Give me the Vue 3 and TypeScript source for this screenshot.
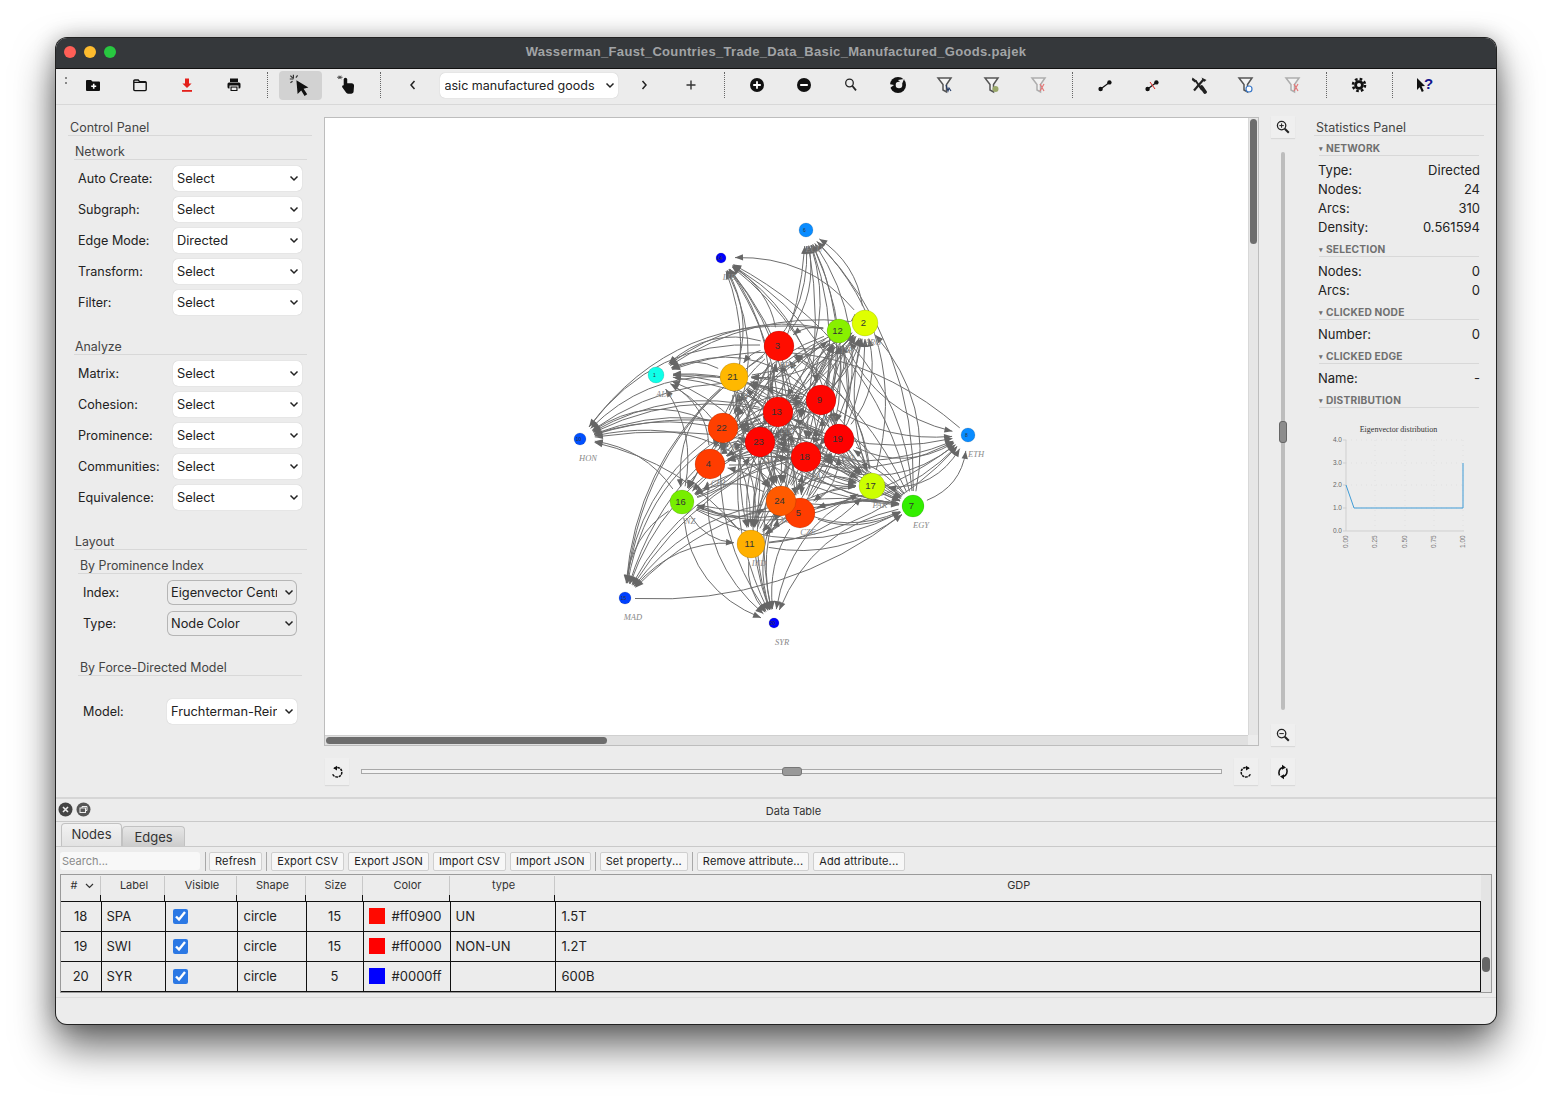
<script setup lang="ts">
import { computed } from 'vue'

interface GraphNode {
  id: number
  label: string
  x: number
  y: number
  r: number
  color: string
}

const networkRows = [
  { label: 'Auto Create:', value: 'Select' },
  { label: 'Subgraph:', value: 'Select' },
  { label: 'Edge Mode:', value: 'Directed' },
  { label: 'Transform:', value: 'Select' },
  { label: 'Filter:', value: 'Select' },
]
const analyzeRows = ['Matrix:', 'Cohesion:', 'Prominence:', 'Communities:', 'Equivalence:']

const statSections = [
  {
    title: 'NETWORK',
    rows: [
      ['Type:', 'Directed'],
      ['Nodes:', '24'],
      ['Arcs:', '310'],
      ['Density:', '0.561594'],
    ],
  },
  { title: 'SELECTION', rows: [['Nodes:', '0'], ['Arcs:', '0']] },
  { title: 'CLICKED NODE', rows: [['Number:', '0']] },
  { title: 'CLICKED EDGE', rows: [['Name:', '-']] },
  { title: 'DISTRIBUTION', rows: [] as string[][] },
]

const tableButtons = [
  ['Refresh', '|'],
  ['Export CSV'],
  ['Export JSON'],
  ['Import CSV'],
  ['Import JSON', '|'],
  ['Set property...', '|'],
  ['Remove attribute...'],
  ['Add attribute...'],
]

const tableRows = [
  { num: 18, label: 'SPA', size: 15, color: '#ff0900', type: 'UN', gdp: '1.5T' },
  { num: 19, label: 'SWI', size: 15, color: '#ff0000', type: 'NON-UN', gdp: '1.2T' },
  { num: 20, label: 'SYR', size: 5, color: '#0000ff', type: '', gdp: '600B' },
]

// node coordinates are page pixels, the svg viewBox starts at the canvas corner
const nodes: GraphNode[] = [
  { id: 1, label: 'ALG', x: 656, y: 375, r: 8, color: '#0fffe8' },
  { id: 2, label: 'ARG', x: 865, y: 323, r: 13, color: '#dfff00' },
  { id: 3, label: 'BRA', x: 779, y: 346, r: 15, color: '#ff0d00' },
  { id: 4, label: 'CHI', x: 710, y: 464, r: 15, color: '#ff3c00' },
  { id: 5, label: 'CZE', x: 800, y: 513, r: 15, color: '#ff3c00' },
  { id: 6, label: 'ECU', x: 806, y: 230, r: 7, color: '#0a8cff' },
  { id: 7, label: 'EGY', x: 913, y: 506, r: 11, color: '#33ee00' },
  { id: 8, label: 'ETH', x: 968, y: 435, r: 7, color: '#0a8cff' },
  { id: 9, label: 'FIN', x: 821, y: 400, r: 15, color: '#ff0500' },
  { id: 10, label: 'HON', x: 580, y: 439, r: 6, color: '#0050ff' },
  { id: 11, label: 'IND', x: 751, y: 544, r: 14, color: '#ffb000' },
  { id: 12, label: 'ISR', x: 839, y: 331, r: 12, color: '#88f000' },
  { id: 13, label: 'JAP', x: 778, y: 412, r: 15, color: '#ff0a00' },
  { id: 14, label: 'LIB', x: 721, y: 258, r: 5, color: '#0000ff' },
  { id: 15, label: 'MAD', x: 625, y: 598, r: 6, color: '#0040ff' },
  { id: 16, label: 'NZ', x: 682, y: 502, r: 12, color: '#77ee00' },
  { id: 17, label: 'PAK', x: 872, y: 486, r: 13, color: '#ccff00' },
  { id: 18, label: 'SPA', x: 806, y: 457, r: 15, color: '#ff0900' },
  { id: 19, label: 'SWI', x: 839, y: 439, r: 15, color: '#ff0000' },
  { id: 20, label: 'SYR', x: 774, y: 623, r: 5, color: '#0000ff' },
  { id: 21, label: 'TAI', x: 734, y: 377, r: 14, color: '#ffb800' },
  { id: 22, label: 'UK', x: 723, y: 428, r: 15, color: '#ff4000' },
  { id: 23, label: 'US', x: 760, y: 442, r: 15, color: '#ff0500' },
  { id: 24, label: 'YUG', x: 781, y: 501, r: 15, color: '#ff5a00' },
]

// small seeded generator so the arcs stay the same on every load
function seeded(start: number) {
  let s = start
  return () => {
    s = (s * 1664525 + 1013904223) % 4294967296
    return s / 4294967296
  }
}

const edges = computed(() => {
  const rand = seeded(20240)
  let lines = ''
  let heads = ''
  for (const a of nodes) {
    for (const b of nodes) {
      if (a === b) continue
      const dx = b.x - a.x
      const dy = b.y - a.y
      const dist = Math.hypot(dx, dy)
      const outer = b.r < 9
      // outer nodes mostly receive, and nothing spans the whole drawing
      const chance = a.r < 9 ? 0.04 : outer ? 0.8 : 0.52
      if (rand() > chance || dist > 340) continue
      const bend = outer ? 0.16 + rand() * 0.14 : 0.12 + rand() * 0.16
      const cx = (a.x + b.x) / 2 - dy * bend
      const cy = (a.y + b.y) / 2 + dx * bend
      // stop short of the target, small nodes keep a wider ring of arrowheads
      const gap = b.r + (outer ? 9 : 3)
      const len = Math.hypot(cx - b.x, cy - b.y) || 1
      const ux = (cx - b.x) / len
      const uy = (cy - b.y) / len
      const ex = b.x + ux * gap
      const ey = b.y + uy * gap
      const startLen = Math.hypot(cx - a.x, cy - a.y) || 1
      const sx = a.x + ((cx - a.x) / startLen) * (a.r + 4)
      const sy = a.y + ((cy - a.y) / startLen) * (a.r + 4)
      lines += `M${sx.toFixed(1)} ${sy.toFixed(1)}Q${cx.toFixed(1)} ${cy.toFixed(1)} ${ex.toFixed(1)} ${ey.toFixed(1)}`
      const bx = ex + ux * 8
      const by = ey + uy * 8
      heads += `M${ex.toFixed(1)} ${ey.toFixed(1)}L${(bx - uy * 3.2).toFixed(1)} ${(by + ux * 3.2).toFixed(1)}L${(bx + uy * 3.2).toFixed(1)} ${(by - ux * 3.2).toFixed(1)}Z`
    }
  }
  return { lines, heads }
})

const chartTicks = [
  { label: '4.0', y: 440 },
  { label: '3.0', y: 463 },
  { label: '2.0', y: 485 },
  { label: '1.0', y: 508 },
  { label: '0.0', y: 531 },
]
const chartXTicks = [
  { label: '0.00', x: 1346 },
  { label: '0.25', x: 1375 },
  { label: '0.50', x: 1405 },
  { label: '0.75', x: 1434 },
  { label: '1.00', x: 1463 },
]
</script>

<template>
  <div class="page">
    <div class="window">
      <!-- Title bar -->
      <header class="titlebar">
        <div class="lights">
          <span class="light red" />
          <span class="light yellow" />
          <span class="light green" />
        </div>
        <span class="title">Wasserman_Faust_Countries_Trade_Data_Basic_Manufactured_Goods.pajek</span>
      </header>

      <!-- Toolbar -->
      <div class="toolbar">
        <span class="grip" />
        <button class="tool">
          <svg width="16" height="16" viewBox="0 0 16 16"><path d="M1 4a1 1 0 0 1 1-1h4l1.500 1.600H14a1 1 0 0 1 1 1V13a1 1 0 0 1-1 1H2a1 1 0 0 1-1-1z" fill="#111" /><path d="M8.700 6.800v5M6.200 9.300h5" stroke="#fff" stroke-width="1.600" /></svg>
        </button>
        <button class="tool">
          <svg width="16" height="16" viewBox="0 0 16 16"><path d="M1.800 4a1 1 0 0 1 1-1h3.400l1.400 1.600h5.600a1 1 0 0 1 1 1V12.600a1 1 0 0 1-1 1H2.800a1 1 0 0 1-1-1z" fill="none" stroke="#111" stroke-width="1.400" /><path d="M2 5.400h12" stroke="#111" stroke-width="1.400" /></svg>
        </button>
        <button class="tool">
          <svg width="16" height="16" viewBox="0 0 16 16"><path d="M6 1.500h4v5h2.600L8 11 3.400 6.500H6z" fill="#e3201b" /><rect x="3" y="13" width="10" height="1.800" fill="#e3201b" /></svg>
        </button>
        <button class="tool">
          <svg width="16" height="16" viewBox="0 0 16 16"><rect x="4" y="1.500" width="8" height="3.500" fill="#111" /><rect x="1.500" y="5.500" width="13" height="6" rx="1.500" fill="#111" /><rect x="4" y="9" width="8" height="5.500" fill="#111" stroke="#ececec" stroke-width="1" /><rect x="5.600" y="10.600" width="4.800" height="2.400" fill="#ececec" /></svg>
        </button>
        <span class="sep" />
        <button class="tool active">
          <svg width="24" height="24" viewBox="0 0 20 20"><path d="M7 6l10 6-4 1.200 3 4.600-2.200 1.400-2.800-4.600-3 2.800z" fill="#111" /><path d="M4.500 1.500v3M1.500 5h3M2 2.200l1.800 1.800M8 2L6.600 3.800M2 8.200l1.800-1.400" stroke="#333" stroke-width="1" fill="none" /></svg>
        </button>
        <button class="tool">
          <svg width="22" height="22" viewBox="0 0 20 20"><rect x="7" y="3.500" width="3.200" height="9" rx="1.600" fill="#111" /><path d="M7.500 8.500h6.700c1.300 0 2.300 1 2.200 2.300l-.4 5.200c-.1 1.200-1 2-2.200 2h-2.600c-.8 0-1.400-.3-1.900-1l-3.600-5c-.6-1 .6-2.200 1.600-1.500l.6.400z" fill="#111" /><path d="M3.500 1.500v3M1 3h5M2 1.800l3 2.600M5 1.800L2 4.400" stroke="#444" stroke-width=".8" fill="none" /></svg>
        </button>
        <span class="sep" />
        <button class="tool">
          <svg width="10" height="12" viewBox="0 0 10 12"><path d="M6.500 2L3 6l3.500 4" fill="none" stroke="#222" stroke-width="1.500" /></svg>
        </button>
        <div class="select-wrap graph-select">
          <select><option>asic manufactured goods</option></select>
          <svg class="chev" width="10" height="7" viewBox="0 0 10 7"><path d="M1.500 1.500L5 5l3.500-3.500" fill="none" stroke="#222" stroke-width="1.500" /></svg>
        </div>
        <button class="tool">
          <svg width="10" height="12" viewBox="0 0 10 12"><path d="M3.500 2L7 6l-3.500 4" fill="none" stroke="#222" stroke-width="1.500" /></svg>
        </button>
        <button class="tool">
          <svg width="12" height="12" viewBox="0 0 12 12"><path d="M6 1.500v9M1.500 6h9" stroke="#333" stroke-width="1.400" /></svg>
        </button>
        <span class="sep" />
        <button class="tool">
          <svg width="16" height="16" viewBox="0 0 16 16"><circle cx="8" cy="8" r="7" fill="#111" /><path d="M8 4.200v7.600M4.200 8h7.600" stroke="#fff" stroke-width="1.800" /></svg>
        </button>
        <button class="tool">
          <svg width="16" height="16" viewBox="0 0 16 16"><circle cx="8" cy="8" r="7" fill="#111" /><path d="M4.200 8h7.600" stroke="#fff" stroke-width="1.800" /></svg>
        </button>
        <button class="tool">
          <svg width="16" height="16" viewBox="0 0 16 16"><circle cx="6.500" cy="6" r="3.800" fill="none" stroke="#222" stroke-width="1.300" /><path d="M9.400 9l3.600 4.400" stroke="#222" stroke-width="1.800" /></svg>
        </button>
        <button class="tool">
          <svg width="18" height="18" viewBox="0 0 18 18"><circle cx="9" cy="9" r="8" fill="#111" /><circle cx="10" cy="9" r="3.300" fill="#ececec" /><path d="M0 8l5 1-4 3z" fill="#ececec" /><path d="M9 4l6-1-2 5z" fill="#ececec" /></svg>
        </button>
        <button class="tool">
          <svg width="18" height="18" viewBox="0 0 18 18"><path d="M2 2h13L10.500 8.500V16L7 14V8.500z" fill="#f4f4f4" stroke="#555" stroke-width="1.500" /><path d="M10 9l2 6 1-3 2 3" fill="none" stroke="#223a66" stroke-width="1.100" /></svg>
        </button>
        <button class="tool">
          <svg width="18" height="18" viewBox="0 0 18 18"><path d="M2 2h13L10.500 8.500V16L7 14V8.500z" fill="#f4f4f4" stroke="#555" stroke-width="1.500" /><circle cx="12.500" cy="13" r="3" fill="#9aa86a" /></svg>
        </button>
        <button class="tool faded">
          <svg width="18" height="18" viewBox="0 0 18 18"><path d="M2 2h13L10.500 8.500V16L7 14V8.500z" fill="#f4f4f4" stroke="#999" stroke-width="1.500" /><path d="M10 8l4 7M14 8l-4 7" stroke="#e25050" stroke-width="1.200" /></svg>
        </button>
        <span class="sep" />
        <button class="tool">
          <svg width="16" height="16" viewBox="0 0 16 16"><path d="M3 12.500L13 5" stroke="#111" stroke-width="1.200" /><circle cx="3.600" cy="12" r="2.200" fill="#111" /><circle cx="12.400" cy="5.400" r="2.200" fill="#111" /></svg>
        </button>
        <button class="tool">
          <svg width="16" height="16" viewBox="0 0 16 16"><path d="M3 12.500L13 5" stroke="#111" stroke-width="1.200" /><circle cx="3.600" cy="12" r="2.200" fill="#111" /><circle cx="12.400" cy="5.400" r="2.200" fill="#111" /><path d="M6 5l5 7" stroke="#e0201c" stroke-width="1" /></svg>
        </button>
        <button class="tool">
          <svg width="18" height="18" viewBox="0 0 18 18"><path d="M5.500 4.500L12 14" stroke="#222" stroke-width="2" /><path d="M11.500 11l3.500 5" stroke="#222" stroke-width="3.800" stroke-linecap="round" /><path d="M13.500 3.500L4 14.500" stroke="#222" stroke-width="2.200" /><path d="M2.500 1.500L6.800 4.800 4.800 6.600 1.800 4z" fill="#222" /><path d="M11.500 1.500l5 2.500-2.500 2z" fill="#222" /></svg>
        </button>
        <button class="tool">
          <svg width="18" height="18" viewBox="0 0 18 18"><path d="M2 2h13L10.500 8.500V16L7 14V8.500z" fill="#f4f4f4" stroke="#555" stroke-width="1.500" /><circle cx="12" cy="13" r="3" fill="#fff" stroke="#3a78c8" stroke-width="1.200" /></svg>
        </button>
        <button class="tool faded">
          <svg width="18" height="18" viewBox="0 0 18 18"><path d="M2 2h13L10.500 8.500V16L7 14V8.500z" fill="#f4f4f4" stroke="#999" stroke-width="1.500" /><path d="M10 8l4 7M14 8l-4 7" stroke="#e25050" stroke-width="1.200" /></svg>
        </button>
        <span class="sep" />
        <button class="tool">
          <svg width="16" height="16" viewBox="0 0 16 16"><circle cx="8" cy="8" r="4.800" fill="#111" /><circle cx="8" cy="8" r="6" fill="none" stroke="#111" stroke-width="2.600" stroke-dasharray="2.600 2.100" /><circle cx="8" cy="8" r="2" fill="#ececec" /></svg>
        </button>
        <span class="sep" />
        <button class="tool">
          <svg class="help" width="20" height="20" viewBox="0 0 20 20"><path d="M2 3l8 8-3.400.3 2.200 4.700-2 .9-2.100-4.700L2 15z" fill="#111" /><text x="9" y="14" class="help-mark">?</text></svg>
        </button>
      </div>

      <!-- Main area -->
      <div class="main">
        <aside class="control-panel">
          <h2 class="panel-title">Control Panel</h2>

          <section class="group first">
            <h3 class="group-title">Network</h3>
            <div v-for="row in networkRows" :key="row.label" class="form-row">
              <label>{{ row.label }}</label>
              <div class="select-wrap">
                <select><option>{{ row.value }}</option></select>
                <svg class="chev" width="10" height="7" viewBox="0 0 10 7"><path d="M1.500 1.500L5 5l3.500-3.500" fill="none" stroke="#222" stroke-width="1.500" /></svg>
              </div>
            </div>
          </section>

          <section class="group">
            <h3 class="group-title">Analyze</h3>
            <div v-for="label in analyzeRows" :key="label" class="form-row">
              <label>{{ label }}</label>
              <div class="select-wrap">
                <select><option>Select</option></select>
                <svg class="chev" width="10" height="7" viewBox="0 0 10 7"><path d="M1.500 1.500L5 5l3.500-3.500" fill="none" stroke="#222" stroke-width="1.500" /></svg>
              </div>
            </div>
          </section>

          <section class="group">
            <h3 class="group-title">Layout</h3>
            <div class="subgroup first">
              <h4 class="subgroup-title">By Prominence Index</h4>
              <div class="form-row sub">
                <label>Index:</label>
                <div class="select-wrap outlined">
                  <select><option>Eigenvector Centrality</option></select>
                  <svg class="chev" width="10" height="7" viewBox="0 0 10 7"><path d="M1.500 1.500L5 5l3.500-3.500" fill="none" stroke="#222" stroke-width="1.500" /></svg>
                </div>
              </div>
              <div class="form-row sub">
                <label>Type:</label>
                <div class="select-wrap outlined">
                  <select><option>Node Color</option></select>
                  <svg class="chev" width="10" height="7" viewBox="0 0 10 7"><path d="M1.500 1.500L5 5l3.500-3.500" fill="none" stroke="#222" stroke-width="1.500" /></svg>
                </div>
              </div>
            </div>
            <div class="subgroup">
              <h4 class="subgroup-title">By Force-Directed Model</h4>
              <div class="form-row sub model">
                <label>Model:</label>
                <div class="select-wrap">
                  <select><option>Fruchterman-Reingold</option></select>
                  <svg class="chev" width="10" height="7" viewBox="0 0 10 7"><path d="M1.500 1.500L5 5l3.500-3.500" fill="none" stroke="#222" stroke-width="1.500" /></svg>
                </div>
              </div>
            </div>
          </section>
        </aside>

        <!-- Canvas with scrollbars and rotate slider -->
        <div class="canvas-col">
          <div class="canvas">
            <div class="viewport">
              <svg class="graph" width="924" height="617" viewBox="325 118 924 617">
                <path :d="edges.lines" class="edge" />
                <path :d="edges.heads" class="head" />
                <text v-for="n in nodes" :key="'l' + n.id" :x="n.x + 8" :y="n.y + 22" class="node-label">{{ n.label }}</text>
                <g v-for="n in nodes" :key="n.id">
                  <circle :cx="n.x" :cy="n.y" :r="n.r" :fill="n.color" class="node" />
                  <text :x="n.x - 1.500" :y="n.y + 0.500" :font-size="n.r >= 10 ? 9.500 : 5" class="node-num">{{ n.id }}</text>
                </g>
              </svg>
            </div>
            <div class="vscroll"><span class="thumb" /></div>
            <div class="hscroll"><span class="thumb" /></div>
            <div class="corner" />
          </div>
          <div class="rotate-row">
            <button class="square">
              <svg width="14" height="14" viewBox="0 0 14 14"><path d="M4 3.500a4.800 4.800 0 1 1-1.600 5" fill="none" stroke="#111" stroke-width="1.500" stroke-dasharray="2.600 .8" /><path d="M7 .8v4.600L3.400 3.200z" fill="#111" /></svg>
            </button>
            <div class="h-slider"><span class="h-thumb" /></div>
            <button class="square">
              <svg width="14" height="14" viewBox="0 0 14 14"><path d="M10 3.500a4.800 4.800 0 1 0 1.600 5" fill="none" stroke="#111" stroke-width="1.500" stroke-dasharray="2.600 .8" /><path d="M7 .8v4.600l3.600-2.200z" fill="#111" /></svg>
            </button>
          </div>
        </div>

        <!-- Zoom column -->
        <div class="zoom-col">
          <button class="square zoom-btn">
            <svg width="14" height="14" viewBox="0 0 14 14"><circle cx="5.600" cy="5.600" r="4.200" fill="none" stroke="#222" stroke-width="1.300" /><path d="M8.800 8.800l4 4" stroke="#222" stroke-width="2" /><path d="M5.600 3.400v4.400M3.400 5.600h4.400" stroke="#222" stroke-width="1" /></svg>
          </button>
          <div class="v-slider"><span class="v-thumb" /></div>
          <button class="square zoom-btn">
            <svg width="14" height="14" viewBox="0 0 14 14"><circle cx="5.600" cy="5.600" r="4.200" fill="none" stroke="#222" stroke-width="1.300" /><path d="M8.800 8.800l4 4" stroke="#222" stroke-width="2" /><path d="M3.400 5.600h4.400" stroke="#222" stroke-width="1" /></svg>
          </button>
          <button class="square reset-btn">
            <svg width="14" height="16" viewBox="0 0 14 16"><path d="M3.500 11.500C2 8 3.500 4.500 6.500 3.500M10.500 4.500C12 8 10.500 11.500 7.500 12.500" fill="none" stroke="#111" stroke-width="1.600" /><path d="M6 .8l4 2.700-4 2.200zM8 15.200l-4-2.700 4-2.200z" fill="#111" /></svg>
          </button>
        </div>

        <!-- Statistics -->
        <aside class="stats-panel">
          <h2 class="panel-title">Statistics Panel</h2>
          <section v-for="sec in statSections" :key="sec.title" class="stat-section">
            <h3 class="stat-head"><span class="caret">▾</span>{{ sec.title }}</h3>
            <div class="stat-rows">
              <div v-for="row in sec.rows" :key="row[0]" class="stat-row">
                <span>{{ row[0] }}</span>
                <span>{{ row[1] }}</span>
              </div>
            </div>
          </section>
          <svg class="chart" width="170" height="140" viewBox="1314 418 170 140">
            <text x="1398.500" y="432" class="chart-title">Eigenvector distribution</text>
            <line v-for="t in chartTicks.slice(0, 4)" :key="'g' + t.y" x1="1346" x2="1464" :y1="t.y" :y2="t.y" class="chart-grid" />
            <line v-for="t in chartXTicks.slice(1)" :key="'v' + t.x" :x1="t.x" :x2="t.x" y1="440" y2="531" class="chart-grid" />
            <path d="M1346 440V531H1464" class="chart-axis" />
            <g v-for="t in chartTicks" :key="t.y">
              <line x1="1343" x2="1346" :y1="t.y" :y2="t.y" class="chart-tick" />
              <text x="1342" :y="t.y + 2" class="chart-y">{{ t.label }}</text>
            </g>
            <text v-for="t in chartXTicks" :key="t.x" class="chart-x" :transform="`translate(${t.x + 2} 548) rotate(-90)`">{{ t.label }}</text>
            <path d="M1346 485L1354 508H1463V463" class="chart-line" />
          </svg>
        </aside>
      </div>

      <!-- Data table dock -->
      <div class="dock">
        <div class="dock-title">
          <span class="dock-icons">
            <svg width="15" height="15" viewBox="0 0 15 15"><circle cx="7.500" cy="7.500" r="7" fill="#444" /><path d="M5 5l5 5M10 5l-5 5" stroke="#eee" stroke-width="1.600" /></svg>
            <svg width="15" height="15" viewBox="0 0 15 15"><circle cx="7.500" cy="7.500" r="7" fill="#555" /><rect x="4" y="6" width="5.500" height="4.500" fill="none" stroke="#eee" stroke-width="1" /><path d="M6 6V4.500h5V8.500H9.500" fill="none" stroke="#eee" stroke-width="1" /></svg>
          </span>
          <span class="dock-label">Data Table</span>
        </div>
        <div class="tabs">
          <button class="tab selected">Nodes</button>
          <button class="tab">Edges</button>
        </div>
        <div class="table-tools">
          <input class="search" placeholder="Search..." />
          <span class="tool-sep" />
          <template v-for="b in tableButtons" :key="b[0]">
            <button class="table-btn">{{ b[0] }}</button>
            <span v-if="b[1]" class="tool-sep" />
          </template>
        </div>
        <div class="table-frame">
          <table class="data-table">
            <colgroup>
              <col style="width: 40px" />
              <col style="width: 64px" />
              <col style="width: 72px" />
              <col style="width: 69px" />
              <col style="width: 57px" />
              <col style="width: 87px" />
              <col style="width: 105px" />
              <col />
            </colgroup>
            <thead>
              <tr>
                <th class="sorted">#<svg width="9" height="6" viewBox="0 0 9 6"><path d="M1 1l3.500 3.500L8 1" fill="none" stroke="#333" stroke-width="1.200" /></svg></th>
                <th>Label</th>
                <th>Visible</th>
                <th>Shape</th>
                <th>Size</th>
                <th>Color</th>
                <th>type</th>
                <th>GDP</th>
              </tr>
            </thead>
            <tbody>
              <tr v-for="row in tableRows" :key="row.num">
                <td class="center">{{ row.num }}</td>
                <td>{{ row.label }}</td>
                <td class="check-cell"><input type="checkbox" checked /></td>
                <td class="nudged">circle</td>
                <td class="center">{{ row.size }}</td>
                <td>
                  <span class="swatch-cell">
                    <span class="swatch" :style="{ background: row.color }" />{{ row.color }}
                  </span>
                </td>
                <td>{{ row.type }}</td>
                <td class="nudged">{{ row.gdp }}</td>
              </tr>
            </tbody>
          </table>
          <div class="table-scroll"><span class="table-thumb" /></div>
        </div>
        <div class="statusbar" />
      </div>
    </div>
  </div>
</template>

<style>
html,
body {
  margin: 0;
  background: #fff;
  overflow: hidden;
}
</style>

<style scoped>
.page {
  width: 1552px;
  height: 1098px;
  padding: 38px 56px 0;
  box-sizing: border-box;
  font-family: Inter, "Liberation Sans", sans-serif;
  color: #222;
}

.window {
  width: 1440px;
  height: 986px;
  display: flex;
  flex-direction: column;
  background: #ececec;
  border-radius: 11px;
  overflow: hidden;
  box-shadow: 0 0 0 1px #222, 0 22px 42px rgba(0, 0, 0, 0.6), 0 0 22px rgba(0, 0, 0, 0.28);
}

button {
  font-family: inherit;
  border: 0;
  padding: 0;
  background: none;
}

/* ────────────────────────────────────────────────────────────────────────── */
/* Title bar */
/* ────────────────────────────────────────────────────────────────────────── */

.titlebar {
  position: relative;
  flex: none;
  height: 26px;
  padding-bottom: 4px;
  display: flex;
  align-items: center;
  justify-content: center;
  background: #35383b;
  border-bottom: 1px solid #111;
}

.lights {
  position: absolute;
  left: 8px;
  top: 8px;
  display: flex;
  gap: 8px;
}

.light {
  width: 12px;
  height: 12px;
  border-radius: 50%;
}

.red { background: #ff5f57; }
.yellow { background: #febc2e; }
.green { background: #28c840; }

.title {
  font-family: "Liberation Sans", sans-serif;
  font-size: 13px;
  font-weight: 700;
  color: #a2a4a6;
  letter-spacing: 0.32px;
}

/* ────────────────────────────────────────────────────────────────────────── */
/* Toolbar */
/* ────────────────────────────────────────────────────────────────────────── */

.toolbar {
  flex: none;
  height: 36px;
  box-sizing: border-box;
  display: flex;
  align-items: center;
  border-bottom: 1px solid #d8d8d8;
  padding: 0 0 3px 9px;
}

.grip {
  width: 2px;
  height: 8px;
  margin-right: 2.500px;
  margin-top: -8px;
  background: repeating-linear-gradient(#888 0 2px, transparent 2px 5px);
}

.tool {
  width: 43px;
  height: 29px;
  margin: 0 2px;
  display: flex;
  align-items: center;
  justify-content: center;
  border-radius: 4px;
  flex: none;
}

.tool.active {
  background: #d2d2d2;
}

.tool.faded svg {
  opacity: 0.75;
}

.sep {
  flex: none;
  width: 0;
  height: 26px;
  margin: 0 8.500px 0 9.500px;
  border-left: 1px dotted #666;
}

.help {
  overflow: visible;
}

.help-mark {
  font-family: "Liberation Sans", sans-serif;
  font-size: 15px;
  font-weight: 700;
  fill: #14148c;
}

.select-wrap {
  position: relative;
  width: 129px;
  height: 25px;
  background: #fff;
  border-radius: 5px;
  box-shadow: 0 0 1px rgba(0, 0, 0, 0.25);
  flex: none;
}

.select-wrap select {
  width: 100%;
  height: 100%;
  appearance: none;
  border: 0;
  outline: 0;
  background: transparent;
  font-family: inherit;
  font-size: 12.800px;
  color: #222;
  padding: 0 20px 0 4px;
  box-sizing: border-box;
}

.chev {
  position: absolute;
  right: 3px;
  top: 9px;
  pointer-events: none;
}

.graph-select {
  width: 178px;
  height: 25px;
  margin: 0 2.500px 0 3px;
}

.graph-select select {
  font-size: 12.500px;
  padding-left: 5px;
}

/* ────────────────────────────────────────────────────────────────────────── */
/* Control panel */
/* ────────────────────────────────────────────────────────────────────────── */

.main {
  flex: none;
  height: 692px;
  display: flex;
}

.control-panel {
  flex: none;
  width: 268px;
  padding: 14px 12px 0;
  box-sizing: border-box;
}

.panel-title {
  margin: 0;
  height: 16px;
  padding-left: 2px;
  font-size: 12.500px;
  font-weight: 400;
  line-height: 18px;
  color: #444;
  border-bottom: 1px solid #d8d8d8;
}

.group {
  margin: 23px 5px 0 6px;
}

.group.first {
  margin-top: 7px;
}

.group-title,
.subgroup-title {
  margin: 0 0 6px;
  height: 16px;
  padding-left: 1px;
  font-size: 12.400px;
  font-weight: 400;
  line-height: 18px;
  color: #444;
  border-bottom: 1px solid #d8d8d8;
}

.form-row {
  display: flex;
  align-items: center;
  justify-content: space-between;
  height: 25px;
  padding: 0 5px 0 4px;
  margin-bottom: 6px;
  font-size: 12.600px;
}

.form-row:last-child {
  margin-bottom: 0;
}

.subgroup {
  margin: 23px 5px 0 4px;
}

.subgroup.first {
  margin-top: 7px;
}

.subgroup-title {
  padding-left: 2px;
}

.form-row.sub {
  padding-left: 5px;
}

.form-row.sub .select-wrap {
  width: 130px;
}

.form-row.model {
  margin-top: 23px;
}

.outlined {
  background: transparent;
  border-radius: 6px;
  box-shadow: inset 0 0 0 1px #b5b5b5;
}

/* ────────────────────────────────────────────────────────────────────────── */
/* Canvas */
/* ────────────────────────────────────────────────────────────────────────── */

.canvas-col {
  flex: none;
  width: 935px;
  padding-top: 12px;
  box-sizing: border-box;
}

.canvas {
  height: 629px;
  display: grid;
  grid-template-columns: 1fr 10px;
  grid-template-rows: 1fr 10px;
  border: 1px solid #bdbdbd;
  box-sizing: border-box;
}

.viewport {
  background: #fff;
  overflow: hidden;
}

.graph {
  display: block;
}

.edge {
  fill: none;
  stroke: #6e6e6e;
  stroke-width: 1;
}

.head {
  fill: #666;
  stroke: none;
}

.node {
  stroke: rgba(0, 0, 0, 0.12);
  stroke-width: 1;
}

.node-num {
  font-family: "Liberation Sans", sans-serif;
  fill: #333;
  text-anchor: middle;
  dominant-baseline: middle;
}

.node-label {
  font-family: "Liberation Serif", serif;
  font-size: 8.500px;
  font-style: italic;
  fill: #888;
  text-anchor: middle;
}

.vscroll {
  background: #e6e6e6;
  border-left: 1px solid #d8d8d8;
  padding: 1px 1px 0;
}

.vscroll .thumb {
  display: block;
  height: 125px;
  background: #6d6d6d;
  border-radius: 4px;
}

.hscroll {
  background: #e0e0e0;
  border-top: 1px solid #d0d0d0;
  padding: 1px 0 0 1px;
}

.hscroll .thumb {
  display: block;
  width: 281px;
  height: 7px;
  background: #6d6d6d;
  border-radius: 4px;
}

.corner {
  background: #ececec;
}

.rotate-row {
  display: flex;
  align-items: center;
  height: 27px;
  margin-top: 12px;
  padding: 0 1px;
}

.square {
  width: 24px;
  height: 27px;
  display: flex;
  align-items: center;
  justify-content: center;
  flex: none;
  background: #efefef;
  box-shadow: 0 1px 1px rgba(0, 0, 0, 0.08);
}

.h-slider {
  position: relative;
  flex: 1;
  height: 5px;
  margin: 0 12px;
  background: #f3f3f3;
  border: 1px solid #a8a8a8;
  box-sizing: border-box;
}

.h-thumb {
  position: absolute;
  left: 420px;
  top: -3px;
  width: 20px;
  height: 9px;
  background: #999;
  border: 1px solid #777;
  border-radius: 3px;
  box-sizing: border-box;
}

/* ────────────────────────────────────────────────────────────────────────── */
/* Zoom column */
/* ────────────────────────────────────────────────────────────────────────── */

.zoom-col {
  flex: none;
  width: 24px;
  margin-left: 12px;
  padding-top: 11px;
  display: flex;
  flex-direction: column;
  align-items: center;
}

.zoom-btn {
  height: 22px;
}

.reset-btn {
  margin-top: 12px;
}

.v-slider {
  position: relative;
  flex: none;
  width: 4px;
  height: 558px;
  margin: 14px 0;
  background: #bdbdbd;
  border-radius: 2px;
}

.v-thumb {
  position: absolute;
  left: -2px;
  top: 269px;
  width: 8px;
  height: 22px;
  background: #8c8c8c;
  border: 1px solid #666;
  border-radius: 3px;
  box-sizing: border-box;
}

/* ────────────────────────────────────────────────────────────────────────── */
/* Statistics panel */
/* ────────────────────────────────────────────────────────────────────────── */

.stats-panel {
  flex: none;
  width: 170px;
  margin-left: 19px;
  padding-top: 14px;
}

.stat-section {
  margin: 5px 5px 0;
}

.stat-head {
  margin: 0;
  height: 14px;
  font-size: 10.200px;
  font-weight: 700;
  line-height: 15px;
  letter-spacing: 0.2px;
  color: #707070;
  border-bottom: 1px solid #d8d8d8;
}

.caret {
  display: inline-block;
  width: 7px;
  font-size: 7px;
  vertical-align: 1px;
}

.stat-rows {
  margin: 5px -1px 0;
}

.stat-rows:empty {
  display: none;
}

.stat-row {
  display: flex;
  justify-content: space-between;
  height: 19px;
  font-size: 13px;
  line-height: 19px;
}

.chart {
  display: block;
  margin-top: 10px;
}

.chart-title {
  font-family: "Liberation Serif", serif;
  font-size: 8px;
  fill: #333;
  text-anchor: middle;
}

.chart-grid {
  stroke: #dcdcdc;
  stroke-width: 0.7;
  stroke-dasharray: 1 4;
}

.chart-axis {
  fill: none;
  stroke: #cfcfcf;
  stroke-width: 1;
}

.chart-tick {
  stroke: #cfcfcf;
}

.chart-y {
  font-family: "Liberation Sans", sans-serif;
  font-size: 6.500px;
  fill: #666;
  text-anchor: end;
}

.chart-x {
  font-family: "Liberation Sans", sans-serif;
  font-size: 6.500px;
  fill: #777;
}

.chart-line {
  fill: none;
  stroke: #3f9bd6;
  stroke-width: 1;
}

/* ────────────────────────────────────────────────────────────────────────── */
/* Data table */
/* ────────────────────────────────────────────────────────────────────────── */

.dock {
  flex: 1;
  display: flex;
  flex-direction: column;
  border-top: 2px solid #d6d6d6;
  min-height: 0;
}

.dock-title {
  position: relative;
  flex: none;
  height: 22px;
  display: flex;
  align-items: center;
  justify-content: center;
  border-bottom: 1px solid #c9c9c9;
}

.dock-icons {
  position: absolute;
  left: 2px;
  top: 3px;
  display: flex;
  gap: 3px;
}

.dock-label {
  font-size: 11px;
  margin: 2px 0 0 35px;
  color: #333;
}

.tabs {
  flex: none;
  height: 24px;
  display: flex;
  align-items: flex-end;
  padding-left: 5px;
  border-bottom: 1px solid #c9c9c9;
}

.tab {
  width: 63px;
  height: 20px;
  font-size: 13px;
  color: #333;
  border: 1px solid #c2c2c2;
  border-bottom: 0;
  border-radius: 4px 4px 0 0;
  background: linear-gradient(#e6e6e6, #cdcdcd);
  box-sizing: border-box;
}

.tab.selected {
  width: 61px;
  height: 23px;
  background: linear-gradient(#f2f2f2, #e2e2e2);
  padding-bottom: 2px;
}

.table-tools {
  flex: none;
  display: flex;
  align-items: center;
  height: 20px;
  margin: 4px 0 3px 4px;
  gap: 4px;
}

.search {
  width: 140px;
  height: 18px;
  padding: 0 2px;
  margin-right: 1px;
  border: 0;
  border-radius: 3px;
  outline: 0;
  background: #f8f8f8;
  font-family: inherit;
  font-size: 11px;
  box-sizing: border-box;
}

.search::placeholder {
  color: #8a8a8a;
}

.tool-sep {
  width: 1px;
  height: 19px;
  background: #a8a8a8;
}

.search + .tool-sep {
  margin-right: -1px;
}

.table-btn {
  height: 19px;
  padding: 0 5px;
  font-size: 11px;
  letter-spacing: 0.15px;
  color: #222;
  background: #f7f7f7;
  border: 1px solid #cfcfcf;
  border-radius: 2px;
  white-space: nowrap;
}

.table-frame {
  flex: none;
  display: flex;
  width: 1432px;
  height: 119px;
  margin-left: 4px;
  border: 1px solid #9a9a9a;
  box-sizing: border-box;
}

.data-table {
  width: 1420px;
  flex: none;
  table-layout: fixed;
  border-collapse: collapse;
  font-size: 13px;
}

.data-table th {
  position: relative;
  height: 26px;
  padding: 0 0 6px 2px;
  font-size: 11px;
  font-weight: 400;
  color: #333;
  border-bottom: 1px solid #111;
  box-sizing: border-box;
}

.data-table th:not(:last-child)::after {
  content: "";
  position: absolute;
  right: 0;
  top: 1px;
  bottom: 0;
  width: 1px;
  background: linear-gradient(#c8c8c8 0 19px, #111 19px);
}

.data-table th.sorted {
  padding-left: 3px;
}

.data-table th.sorted svg {
  margin-left: 8px;
}

.data-table td {
  height: 30px;
  padding: 0 5px;
  border-right: 1px solid #111;
  border-bottom: 1px solid #111;
  box-sizing: border-box;
  white-space: nowrap;
}

.data-table td.center {
  text-align: center;
}

.data-table td.nudged {
  padding-left: 6px;
}

.check-cell input {
  display: block;
  width: 15px;
  height: 15px;
  margin: 0 0 0 2px;
  accent-color: #2b78e4;
}

.swatch-cell {
  display: flex;
  align-items: center;
  gap: 7px;
}

.swatch {
  width: 16px;
  height: 16px;
}

.table-scroll {
  flex: 1;
  background: #e4e4e4;
  padding: 82px 1px 0;
}

.table-thumb {
  display: block;
  width: 8px;
  height: 15px;
  background: #666;
  border-radius: 4px;
}

.statusbar {
  flex: 1;
  margin-top: 4px;
  border-top: 1px solid #dcdcdc;
}
</style>
